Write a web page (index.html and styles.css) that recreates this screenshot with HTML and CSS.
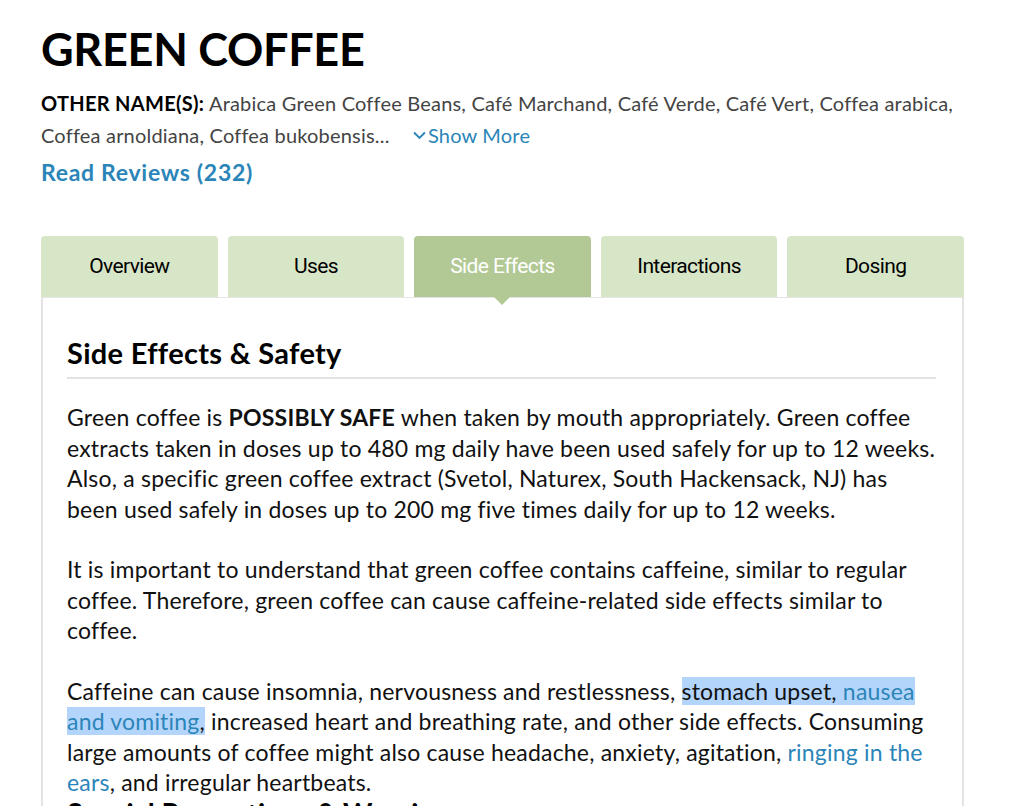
FILE: index.html
```html
<!DOCTYPE html>
<html lang="en">
<head>
    <meta charset="UTF-8">
    <meta name="viewport" content="width=device-width, initial-scale=1.0">
    <title>Green Coffee</title>
    <link rel="stylesheet" href="styles.css">
</head>
<body>

    <div class="page">
        <h1 class="title">GREEN COFFEE</h1>

        <p class="other-names">
            <strong>OTHER NAME(S):</strong> Arabica Green Coffee Beans, Café Marchand, Café Verde, Café Vert, Coffea arabica,
            Coffea arnoldiana, Coffea bukobensis...
            <a href="#" class="show-more"><svg class="chevron" viewBox="0 0 12 8" width="13" height="9"><path d="M1 1.2 6 6.2 11 1.2" fill="none" stroke="currentColor" stroke-width="1.8"/></svg>Show More</a>
        </p>

        <a href="#" class="reviews">Read Reviews (232)</a>

        <!-- Tabs -->
        <div class="tabs">
            <div class="tab">Overview</div>
            <div class="tab">Uses</div>
            <div class="tab active">Side Effects</div>
            <div class="tab">Interactions</div>
            <div class="tab">Dosing</div>
        </div>

        <div class="panel">
            <h2 class="section-title">Side Effects &amp; Safety</h2>

            <p>Green coffee is <strong>POSSIBLY SAFE</strong> when taken by mouth appropriately. Green coffee extracts taken in doses up to 480 mg daily have been used safely for up to 12 weeks. Also, a specific green coffee extract (Svetol, Naturex, South Hackensack, NJ) has been used safely in doses up to 200 mg five times daily for up to 12 weeks.</p>

            <p>It is important to understand that green coffee contains caffeine, similar to regular coffee. Therefore, green coffee can cause caffeine-related side effects similar to coffee.</p>

            <p class="last">Caffeine can cause insomnia, nervousness and restlessness, <span class="selected">stomach upset, <a href="#">nausea and vomiting</a>,</span> increased heart and breathing rate, and other side effects. Consuming large amounts of coffee might also cause headache, anxiety, agitation, <a href="#">ringing in the ears</a>, and irregular heartbeats.</p>

            <h3 class="sub-title">Special Precautions &amp; Warnings:</h3>
        </div>
    </div>

</body>
</html>
```

FILE: styles.css
```css
/* General */
body {
    margin: 0;
    padding: 0;
    background-color: #fff;
    color: #111;
    font-family: "Source Sans Pro", Lato, "Noto Sans", sans-serif;
    overflow: hidden;
}

a {
    color: #2b85b8;
    text-decoration: none;
}

.page {
    width: 923px;
    padding: 22px 0 0 41px;
}

/* Header */
.title {
    font-size: 45px;
    font-weight: 700;
    line-height: 54px;
    margin: 0 0 11px;
    letter-spacing: -0.3px;
    color: #000;
}

.other-names {
    font-size: 20px;
    letter-spacing: 0.2px;
    line-height: 32px;
    color: #444;
    margin: 0;
}

.other-names strong {
    color: #000;
    font-size: 20px;
    letter-spacing: 0.3px;
}

.show-more {
    margin-left: 18px;
}

.chevron {
    margin-right: 2px;
    vertical-align: 3px;
}

.reviews {
    display: inline-block;
    font-size: 23px;
    font-weight: 700;
    letter-spacing: 0.7px;
    line-height: 30px;
    margin-top: 6px;
}

/* Tabs */
.tabs {
    display: flex;
    gap: 10px;
    margin-top: 49px;
}

.tab {
    flex: 1;
    height: 61px;
    line-height: 60px;
    background-color: #d8e6c8;
    border-radius: 4px 4px 0 0;
    text-align: center;
    font-family: Roboto, sans-serif;
    font-size: 21px;
    letter-spacing: -0.6px;
    color: #000;
    position: relative;
}

.tab.active {
    background-color: #b2c995;
    color: #fff;
}

.tab.active::after {
    content: "";
    position: absolute;
    left: 50%;
    bottom: -8px;
    margin-left: -9px;
    border-left: 9px solid transparent;
    border-right: 9px solid transparent;
    border-top: 9px solid #b2c995;
    z-index: 2;
}

/* Panel */
.panel {
    border: 2px solid #e4e4e4;
    border-bottom: none;
    border-top-width: 1px;
    padding: 35px 26px 0 24px;
    height: 473px;
}

.section-title {
    font-size: 29px;
    font-weight: 700;
    letter-spacing: 0.3px;
    line-height: 40px;
    margin: 0 0 23px;
    padding-bottom: 4px;
    border-bottom: 2px solid #e2e2e2;
    color: #000;
}

.panel p {
    font-size: 23px;
    letter-spacing: 0.2px;
    line-height: 30.5px;
    margin: 0 0 30px;
}

.panel p.last {
    margin-bottom: 0;
}

.selected {
    background-color: #b4d5fb;
}

.sub-title {
    font-size: 28px;
    font-weight: 700;
    line-height: 30px;
    margin: 0;
    color: #000;
}
```
